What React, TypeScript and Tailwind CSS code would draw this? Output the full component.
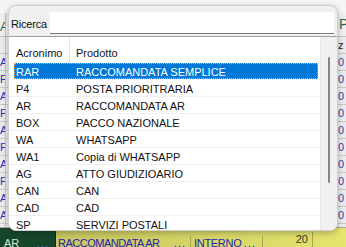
import React from "react";

const rows: [string, string][] = [
  ["RAR", "RACCOMANDATA SEMPLICE"],
  ["P4", "POSTA PRIORITRARIA"],
  ["AR", "RACCOMANDATA AR"],
  ["BOX", "PACCO NAZIONALE"],
  ["WA", "WHATSAPP"],
  ["WA1", "Copia di WHATSAPP"],
  ["AG", "ATTO GIUDIZIOARIO"],
  ["CAN", "CAN"],
  ["CAD", "CAD"],
  ["SP", "SERVIZI POSTALI"],
];

const bgLetters = ["", "A", "P", "A", "P", "A", "P", "A", "P", "A", "A", "A"];

export default function App() {
  return (
    <div
      className="relative w-[346px] h-[247px] overflow-hidden bg-[#efefef] text-[11px] tracking-[0px]"
      style={{ fontFamily: '"Liberation Sans", Arial, sans-serif' }}
    >
      {/* background application */}
      <div className="flex flex-col h-full">
        <div className="h-[13px] bg-[#f5f5f5]" />
        <div className="h-[24px] flex border-b border-[#c4c4c4] bg-[#f0f0f0]">
          <div className="w-[6px] border-r border-[#c4c4c4] text-[13px] leading-[24px] pt-[2px] text-[#1f6b5a] overflow-hidden whitespace-nowrap">
            A
          </div>
          <div className="flex-1" />
          <div className="w-[9px] text-[14px] leading-[22px] text-[#1f6b5a] pl-[2px] overflow-hidden">P</div>
        </div>
        <div className="h-[194px] flex flex-col overflow-hidden">
          {bgLetters.map((l, i) => (
            <div key={i} className="h-[17px] shrink-0 flex border-b border-[#c8c8c8] bg-[#ebebeb]">
              <div className="w-[6px] border-r border-[#c4c4c4] text-[#2030c0] leading-[16px] overflow-hidden">{l}</div>
              <div className="flex-1" />
              <div className="w-[9px] border-l border-[#c4c4c4] leading-[16px] overflow-hidden whitespace-nowrap text-[#3040b0]">
                {i === 0 ? <span className="text-[#222]">z</span> : "0"}
              </div>
            </div>
          ))}
        </div>
        <div className="h-[20px] shrink-0 flex border-t border-[#a8a8a8]">
          <div className="w-[56px] bg-[#17472a] border-r border-[#0d2b18] flex pt-[8px] pl-[4px] text-[11px] leading-[14px]">
            <span className="text-[#d6e6d6]">AR</span>
            <span className="ml-auto mr-[6px] text-[#4a6ad0] tracking-[1px]">...</span>
          </div>
          <div className="flex-1 flex bg-linear-to-r from-[#c6c660] to-[#e4e46e] text-[11px] leading-[14px] pt-[8px]">
            <div className="w-[135px] flex pl-[2px] border-r border-[#a6a650] text-[#2424b4] tracking-[-0.5px]">
              <span>RACCOMANDATA AR</span>
              <span className="ml-auto mr-[4px] tracking-[1px]">...</span>
            </div>
            <div className="w-[72px] flex pl-[3px] border-r border-[#a6a650] text-[#2424b4] tracking-[-0.3px]">
              <span>INTERNO</span>
              <span className="ml-auto mr-[6px] tracking-[1px]">...</span>
            </div>
            <div className="w-[50px] border-r border-[#a6a650] text-right pr-[4px] -mt-[4px] text-[#333]">20</div>
            <div className="flex-1" />
          </div>
        </div>
      </div>

      {/* popup */}
      <div className="absolute left-[8px] top-[5px] w-[330px] h-[226px] rounded-[8px] border border-[#cfcfcf] bg-[#f0f0f0] shadow-[0_2px_6px_rgba(0,0,0,0.25)] overflow-hidden flex flex-col">
        <div className="h-[30px] shrink-0 flex items-start pt-[6px]">
          <div className="w-[41px] h-[22px] pl-[2px] pt-[2px] flex items-center text-[11px] text-[#111] tracking-[-0.2px]">Ricerca</div>
          <div className="flex-1 h-[22px] mr-[3px] bg-white border-b border-[#7c7c7c]" />
        </div>
        <div className="flex-1 flex border-t border-[#a0a0a0] min-h-0">
          <div className="flex-1 bg-white pl-[5px] overflow-hidden">
            <div className="h-[26px] flex text-[#111]">
              <div className="w-[56px] border-r border-[#e5e5e5] pl-[2px] pt-[8px] leading-[16px]">Acronimo</div>
              <div className="flex-1 pl-[6px] pt-[8px] leading-[16px]">Prodotto</div>
            </div>
            {rows.map(([a, p], i) => (
              <div key={a} className="h-[17px] -ml-[5px] pl-[5px] border-b border-[#f0f0f0] box-border">
                {i === 0 ? (
                  <div className="h-[16px] mr-[2px] flex bg-[#0078d7] text-white outline-1 outline-dotted -outline-offset-1 outline-[#f0b050]">
                    <div className="w-[56px] pl-[2px] pt-[1px] leading-[16px]">{a}</div>
                    <div className="flex-1 pl-[6px] pt-[1px] leading-[16px]">{p}</div>
                  </div>
                ) : (
                  <div className="h-[16px] flex text-[#111]">
                    <div className="w-[56px] pl-[2px] pt-[1px] leading-[16px]">{a}</div>
                    <div className="flex-1 pl-[6px] pt-[1px] leading-[16px]">{p}</div>
                  </div>
                )}
              </div>
            ))}
          </div>
          <div className="w-[17px] bg-[#f0f0f0] border-l border-[#e6e6e6] flex flex-col items-center pt-[20px]">
            <div className="w-[2px] h-[126px] rounded-full bg-[#858585]" />
          </div>
        </div>
      </div>
    </div>
  );
}
